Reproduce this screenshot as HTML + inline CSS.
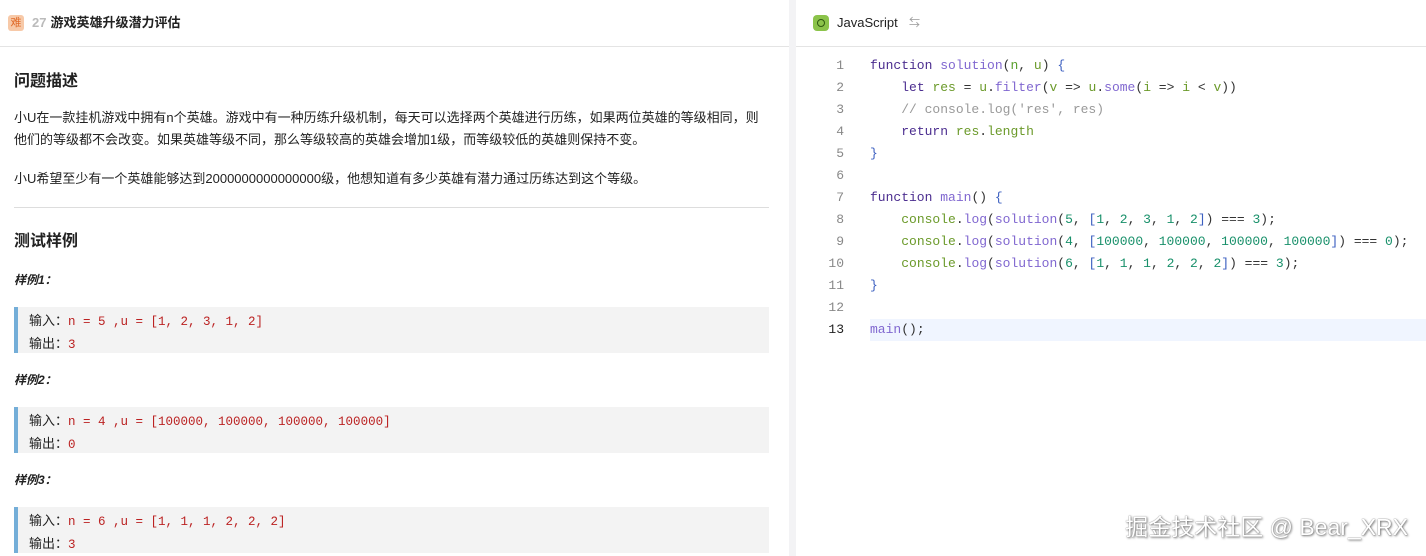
<!DOCTYPE html>
<html><head><meta charset="utf-8"><style>
*{margin:0;padding:0;box-sizing:border-box}
body{width:1426px;height:556px;overflow:hidden;background:#fff;font-family:"Liberation Sans","Noto Sans CJK SC",sans-serif;color:#222;position:relative}
.l{position:absolute;left:0;top:0;width:789px;height:556px}
.hd{height:47px;border-bottom:1px solid #e4e4e4;position:relative}
.tag{position:absolute;left:8px;top:15px;width:16px;height:16px;background:#f7c9a8;border-radius:3px;color:#e06b2a;font-size:11px;line-height:16px;text-align:center}
.tt{position:absolute;left:32px;top:14px;font-size:13px;font-weight:bold;line-height:18px}
.tt span{color:#bbb;margin-right:4px}
.a{position:absolute;left:14px;font-size:13px;line-height:22px;white-space:nowrap}
.h{font-size:16px;font-weight:bold}
.s{font-size:12px;font-weight:bold;font-style:italic}
.blk{position:absolute;left:14px;width:755px;height:46px;background:#f3f3f3;border-left:4px solid #74aed8;padding:3px 0 0 11px;font-size:13px;line-height:22px}
.blk b{font-weight:normal;color:#b22;font-family:"Liberation Mono",monospace;font-size:12.5px}
.div{position:absolute;left:789px;top:0;width:7px;height:556px;background:#f3f3f5}
.r{position:absolute;left:796px;top:0;width:630px;height:556px}
.rh{height:47px;border-bottom:1px solid #e4e4e4;position:relative}
.js{position:absolute;left:17px;top:15px;width:16px;height:16px;background:#8bc34a;border-radius:4px}
.js:after{content:"";position:absolute;left:4px;top:4px;width:6px;height:6px;border:1.5px solid #2f5a10;border-radius:50%}
.jt{position:absolute;left:41px;top:14px;font-size:13px;line-height:18px;color:#222}
.sw{position:absolute;left:113px;top:14px;font-size:11px;color:#999}
.code{position:absolute;left:0;top:55px;width:630px;font-family:"Liberation Mono",monospace;font-size:13px;line-height:22px}
.ln{position:relative;height:22px}
.n{position:absolute;left:0;width:48px;text-align:right;color:#888}
.c{position:absolute;left:74px;color:#333;white-space:pre}
.cur{background:#f0f5ff}
.k{color:#4b2d8f}.f{color:#8067d0}.v{color:#6b9a2a}.p{color:#5aa02c}.num{color:#18906a}.cm{color:#999}.br{color:#3c5fc0}
.wm{position:absolute;right:18px;top:508px;font-size:23px;color:#fff;text-shadow:0 0 1px #555,1px 1px 2px #777}
</style></head><body>
<div class="l">
<div class="hd"><div class="tag">难</div><div class="tt"><span>27</span>游戏英雄升级潜力评估</div></div>
<div class="a h" style="top:71px">问题描述</div>
<div class="a" style="top:107px">小U在一款挂机游戏中拥有n个英雄。游戏中有一种历练升级机制，每天可以选择两个英雄进行历练，如果两位英雄的等级相同，则<br>他们的等级都不会改变。如果英雄等级不同，那么等级较高的英雄会增加1级，而等级较低的英雄则保持不变。</div>
<div class="a" style="top:168px">小U希望至少有一个英雄能够达到2000000000000000级，他想知道有多少英雄有潜力通过历练达到这个等级。</div>
<div style="position:absolute;left:14px;top:207px;width:755px;height:1px;background:#ddd"></div>
<div class="a h" style="top:231px">测试样例</div>
<div class="a s" style="top:269px">样例1：</div>
<div class="blk" style="top:307px">输入：<b>n = 5 ,u = [1, 2, 3, 1, 2]</b><br>输出：<b>3</b></div>
<div class="a s" style="top:369px">样例2：</div>
<div class="blk" style="top:407px">输入：<b>n = 4 ,u = [100000, 100000, 100000, 100000]</b><br>输出：<b>0</b></div>
<div class="a s" style="top:469px">样例3：</div>
<div class="blk" style="top:507px">输入：<b>n = 6 ,u = [1, 1, 1, 2, 2, 2]</b><br>输出：<b>3</b></div>
</div>
<div class="div"></div>
<div class="r">
<div class="rh"><div class="js"></div><div class="jt">JavaScript</div><div class="sw">⇆</div></div>
<div class="code"><div class="ln"><span class="n">1</span><span class="c"><span class="k">function</span> <span class="f">solution</span>(<span class="p">n</span>, <span class="v">u</span>) <span class="br">{</span></span></div><div class="ln"><span class="n">2</span><span class="c">    <span class="k">let</span> <span class="v">res</span> = <span class="v">u</span>.<span class="f">filter</span>(<span class="v">v</span> =&gt; <span class="v">u</span>.<span class="f">some</span>(<span class="v">i</span> =&gt; <span class="v">i</span> &lt; <span class="v">v</span>))</span></div><div class="ln"><span class="n">3</span><span class="c cm">    // console.log('res', res)</span></div><div class="ln"><span class="n">4</span><span class="c">    <span class="k">return</span> <span class="v">res</span>.<span class="v">length</span></span></div><div class="ln"><span class="n">5</span><span class="c br">}</span></div><div class="ln"><span class="n">6</span></div><div class="ln"><span class="n">7</span><span class="c"><span class="k">function</span> <span class="f">main</span>() <span class="br">{</span></span></div><div class="ln"><span class="n">8</span><span class="c">    <span class="v">console</span>.<span class="f">log</span>(<span class="f">solution</span>(<span class="num">5</span>, <span class="br">[</span><span class="num">1</span>, <span class="num">2</span>, <span class="num">3</span>, <span class="num">1</span>, <span class="num">2</span><span class="br">]</span>) === <span class="num">3</span>);</span></div><div class="ln"><span class="n">9</span><span class="c">    <span class="v">console</span>.<span class="f">log</span>(<span class="f">solution</span>(<span class="num">4</span>, <span class="br">[</span><span class="num">100000</span>, <span class="num">100000</span>, <span class="num">100000</span>, <span class="num">100000</span><span class="br">]</span>) === <span class="num">0</span>);</span></div><div class="ln"><span class="n">10</span><span class="c">    <span class="v">console</span>.<span class="f">log</span>(<span class="f">solution</span>(<span class="num">6</span>, <span class="br">[</span><span class="num">1</span>, <span class="num">1</span>, <span class="num">1</span>, <span class="num">2</span>, <span class="num">2</span>, <span class="num">2</span><span class="br">]</span>) === <span class="num">3</span>);</span></div><div class="ln"><span class="n">11</span><span class="c br">}</span></div><div class="ln"><span class="n">12</span></div><div class="ln"><span class="n" style="color:#222">13</span><span class="c cur" style="width:556px"><span class="f">main</span>();</span></div></div>
</div>
<div class="wm">掘金技术社区 @ Bear_XRX</div>
</body></html>
